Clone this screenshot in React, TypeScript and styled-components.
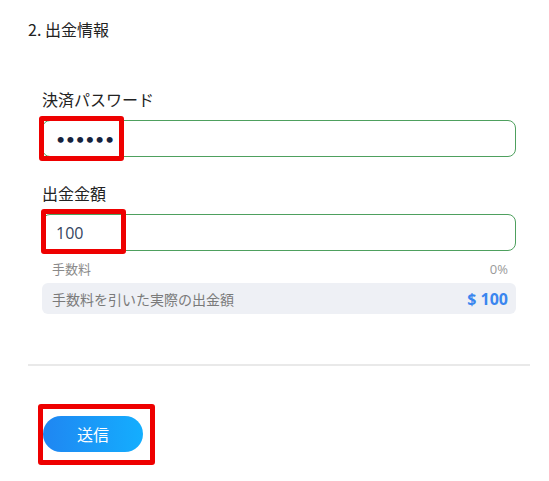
import React from "react";
import styled, { createGlobalStyle } from "styled-components";

const Global = createGlobalStyle`
  html, body { margin: 0; padding: 0; background: #ffffff; }
  body { font-family: "Noto Sans CJK JP", "Noto Sans", sans-serif; color: #222; }
`;

const Page = styled.div`
  padding: 19px 19px 28px 28px;
  width: 549px;
  box-sizing: border-box;
`;

const Title = styled.h2`
  margin: 0;
  font-size: 16px;
  line-height: 20px;
  font-weight: 400;
  color: #222;
`;

const Form = styled.div`
  display: flex;
  flex-direction: column;
  padding-left: 14px;
  width: 474px;
  margin-top: 50px;
`;

const Label = styled.div<{ $top?: number }>`
  font-size: 16px;
  line-height: 20px;
  color: #222;
  margin-top: ${(p) => p.$top ?? 0}px;
`;

const Field = styled.div`
  position: relative;
  margin-top: 11px;
`;

const Input = styled.input`
  display: block;
  width: 100%;
  height: 37px;
  box-sizing: border-box;
  border: 1px solid #4ea05e;
  border-radius: 8px;
  padding: 0 13px;
  font-family: "Open Sans", "Noto Sans", sans-serif;
  font-size: 16px;
  color: #34455f;
  background: #fff;
  outline: none;
  &[type="password"] {
    font-family: "Lato", sans-serif;
    font-size: 16px;
    letter-spacing: 0.5px;
    color: #15223d;
  }
`;

const Mark = styled.div<{ $l: number; $t: number; $w: number; $h: number }>`
  position: absolute;
  left: ${(p) => p.$l}px;
  top: ${(p) => p.$t}px;
  width: ${(p) => p.$w}px;
  height: ${(p) => p.$h}px;
  border: 5px solid #ee0000;
  border-radius: 3px;
  box-sizing: border-box;
  pointer-events: none;
`;

const FeeRow = styled.div`
  display: flex;
  justify-content: space-between;
  align-items: center;
  margin-top: 9px;
  padding: 0 8px 0 10px;
  font-size: 13px;
  line-height: 18px;
  color: #8a8a8a;
`;

const FeePct = styled.span`
  font-family: "Open Sans", "Noto Sans", sans-serif;
  font-size: 13px;
  color: #9a9a9a;
`;

const NetBox = styled.div`
  display: flex;
  justify-content: space-between;
  align-items: center;
  margin-top: 5px;
  height: 31px;
  padding: 0 8px 0 10px;
  background: #eef0f5;
  border-radius: 6px;
  font-size: 14px;
  color: #7a7a7a;
`;

const NetAmount = styled.span`
  font-family: "Open Sans", "Noto Sans", sans-serif;
  font-weight: 700;
  font-size: 16px;
  color: #3a86ef;
`;

const Divider = styled.hr`
  border: none;
  height: 2px;
  background: #e9e9e9;
  margin: 50px 0 0 0;
  width: 502px;
`;

const ButtonWrap = styled.div`
  position: relative;
  margin: 50px 0 0 15px;
  width: 100px;
`;

const Submit = styled.button`
  display: block;
  width: 100px;
  height: 36px;
  border: none;
  border-radius: 18px;
  background: linear-gradient(90deg, #1f86f2 0%, #14aefe 100%);
  color: #fff;
  font-family: "Noto Sans CJK JP", sans-serif;
  font-size: 16px;
  cursor: pointer;
`;

export default function App() {
  return (
    <>
      <Global />
      <Page>
        <Title>2. 出金情報</Title>
        <Form>
          <Label>決済パスワード</Label>
          <Field>
            <Input type="password" defaultValue="123456" />
            <Mark $l={-3} $t={-4} $w={85} $h={45} />
          </Field>
          <Label $top={26}>出金金額</Label>
          <Field>
            <Input type="text" defaultValue="100" />
            <Mark $l={-1} $t={-5} $w={85} $h={45} />
          </Field>
          <FeeRow>
            <span>手数料</span>
            <FeePct>0%</FeePct>
          </FeeRow>
          <NetBox>
            <span>手数料を引いた実際の出金額</span>
            <NetAmount>$ 100</NetAmount>
          </NetBox>
        </Form>
        <Divider />
        <ButtonWrap>
          <Submit>送信</Submit>
          <Mark $l={-5} $t={-12} $w={117} $h={61} />
        </ButtonWrap>
      </Page>
    </>
  );
}
